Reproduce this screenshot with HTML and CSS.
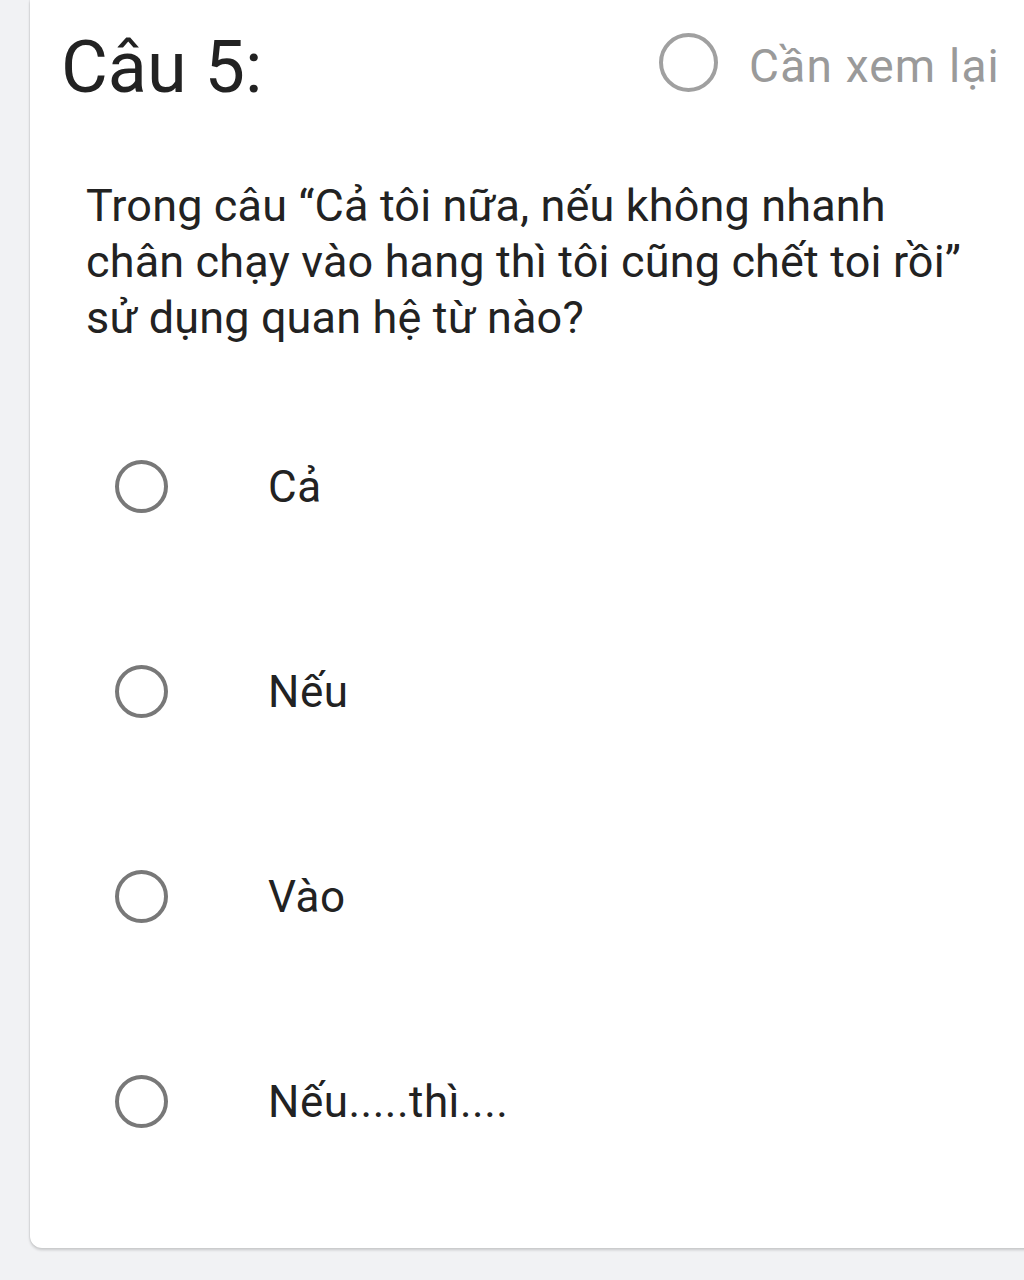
FILE: index.html
```html
<!DOCTYPE html>
<html lang="vi">
<head>
<meta charset="utf-8">
<link rel="stylesheet" href="styles.css">
</head>
<body>
<div class="card">
  <div class="header">
    <div class="title">Câu 5:</div>
    <div class="review">
      <span class="radio radio-light"></span>
      <span class="review-text">Cần xem lại</span>
    </div>
  </div>
  <div class="question">Trong câu “Cả tôi nữa, nếu không nhanh chân chạy vào hang thì tôi cũng chết toi rồi” sử dụng quan hệ từ nào?</div>
  <div class="options">
    <div class="option"><span class="radio"></span><span class="opt-text">Cả</span></div>
    <div class="option"><span class="radio"></span><span class="opt-text">Nếu</span></div>
    <div class="option"><span class="radio"></span><span class="opt-text">Vào</span></div>
    <div class="option"><span class="radio"></span><span class="opt-text">Nếu.....thì....</span></div>
  </div>
</div>
</body>
</html>
```

FILE: styles.css
```css
html, body {
  margin: 0;
  padding: 0;
}
body {
  background: #f1f2f4;
  font-family: Roboto, "Noto Sans", "Liberation Sans", sans-serif;
  width: 1024px;
  height: 1280px;
  overflow: hidden;
}
.card {
  margin-left: 30px;
  width: 1010px;
  height: 1248px;
  box-sizing: border-box;
  background: #fff;
  border-radius: 0 0 0 12px;
  box-shadow: 0 2px 3px rgba(0,0,0,0.18), -1px 0 1px rgba(0,0,0,0.05);
  padding: 26px 0 0 0;
}
.header {
  display: flex;
  justify-content: space-between;
  align-items: flex-start;
  height: 84px;
  padding-left: 31px;
  padding-right: 40px;
}
.title {
  font-size: 72px;
  line-height: 84px;
  color: #222;
}
.review {
  display: flex;
  align-items: center;
  margin-top: 4px;
}
.review-text {
  font-size: 46px;
  line-height: 56px;
  letter-spacing: 1.2px;
  padding-top: 8px;
  color: #9a9a9a;
  margin-left: 31px;
}
.radio {
  display: inline-block;
  box-sizing: border-box;
  width: 53px;
  height: 53px;
  border: 4.5px solid #787878;
  border-radius: 50%;
  flex: none;
}
.radio-light {
  width: 59px;
  height: 59px;
  border-color: #a0a0a0;
}
.question {
  margin-top: 68px;
  padding-left: 56px;
  width: 890px;
  font-size: 45px;
  line-height: 56px;
  letter-spacing: 0.15px;
  color: #222;
}
.options {
  margin-top: 38px;
  display: flex;
  flex-direction: column;
}
.option {
  display: flex;
  align-items: center;
  height: 205px;
  padding-left: 85px;
}
.opt-text {
  margin-left: 100px;
  font-size: 44px;
  letter-spacing: 0.5px;
  color: #222;
}
```
